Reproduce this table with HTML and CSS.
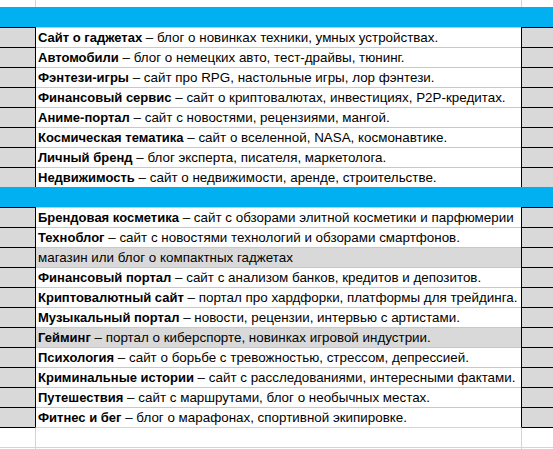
FILE: index.html
```html
<!DOCTYPE html>
<html lang="ru">
<head>
<meta charset="utf-8">
<link rel="stylesheet" href="styles.css">
</head>
<body>
<div class="sheet">
  <div class="row top"><div class="a"></div><div class="b"></div><div class="c"></div></div>
  <div class="row blue"><div class="a"></div><div class="b"></div><div class="c"></div></div>

  <div class="row data"><div class="a"></div><div class="b"><b>Сайт о гаджетах</b> – блог о новинках техники, умных устройствах.</div><div class="c"></div></div>
  <div class="row data"><div class="a"></div><div class="b"><b>Автомобили</b> – блог о немецких авто, тест-драйвы, тюнинг.</div><div class="c"></div></div>
  <div class="row data"><div class="a"></div><div class="b"><b>Фэнтези-игры</b> – сайт про RPG, настольные игры, лор фэнтези.</div><div class="c"></div></div>
  <div class="row data"><div class="a"></div><div class="b"><b>Финансовый сервис</b> – сайт о криптовалютах, инвестициях, P2P-кредитах.</div><div class="c"></div></div>
  <div class="row data"><div class="a"></div><div class="b"><b>Аниме-портал</b> – сайт с новостями, рецензиями, мангой.</div><div class="c"></div></div>
  <div class="row data"><div class="a"></div><div class="b"><b>Космическая тематика</b> – сайт о вселенной, NASA, космонавтике.</div><div class="c"></div></div>
  <div class="row data"><div class="a"></div><div class="b"><b>Личный бренд</b> – блог эксперта, писателя, маркетолога.</div><div class="c"></div></div>
  <div class="row data"><div class="a"></div><div class="b"><b>Недвижимость</b> – сайт о недвижимости, аренде, строительстве.</div><div class="c"></div></div>

  <div class="row blue"><div class="a"></div><div class="b"></div><div class="c"></div></div>

  <div class="row data"><div class="a"></div><div class="b"><b>Брендовая косметика</b> – сайт с обзорами элитной косметики и парфюмерии</div><div class="c"></div></div>
  <div class="row data"><div class="a"></div><div class="b"><b>Техноблог</b> – сайт с новостями технологий и обзорами смартфонов.</div><div class="c"></div></div>
  <div class="row data shade"><div class="a"></div><div class="b">магазин или блог о компактных гаджетах</div><div class="c"></div></div>
  <div class="row data"><div class="a"></div><div class="b"><b>Финансовый портал</b> – сайт с анализом банков, кредитов и депозитов.</div><div class="c"></div></div>
  <div class="row data"><div class="a"></div><div class="b"><b>Криптовалютный сайт</b> – портал про хардфорки, платформы для трейдинга.</div><div class="c"></div></div>
  <div class="row data"><div class="a"></div><div class="b"><b>Музыкальный портал</b> – новости, рецензии, интервью с артистами.</div><div class="c"></div></div>
  <div class="row data shade"><div class="a"></div><div class="b"><b>Гейминг</b> – портал о киберспорте, новинках игровой индустрии.</div><div class="c"></div></div>
  <div class="row data"><div class="a"></div><div class="b"><b>Психология</b> – сайт о борьбе с тревожностью, стрессом, депрессией.</div><div class="c"></div></div>
  <div class="row data"><div class="a"></div><div class="b"><b>Криминальные истории</b> – сайт с расследованиями, интересными фактами.</div><div class="c"></div></div>
  <div class="row data"><div class="a"></div><div class="b"><b>Путешествия</b> – сайт с маршрутами, блог о необычных местах.</div><div class="c"></div></div>
  <div class="row data"><div class="a"></div><div class="b"><b>Фитнес и бег</b> – блог о марафонах, спортивной экипировке.</div><div class="c"></div></div>

  <div class="row empty first"><div class="a"></div><div class="b"></div><div class="c"></div></div>
  <div class="row empty"><div class="a"></div><div class="b"></div><div class="c"></div></div>
</div>
</body>
</html>
```

FILE: styles.css
```css
html, body {
  margin: 0;
  padding: 0;
  background: #ffffff;
}

body {
  font-family: "Liberation Sans", Arial, sans-serif;
  font-size: 13.4px;
  color: #000000;
}

.sheet {
  width: 553px;
  height: 449px;
  overflow: hidden;
}

.row {
  display: grid;
  grid-template-columns: 36px 485px 32px;
  height: 20px;
}

.row > div {
  box-sizing: border-box;
  height: 100%;
}

.row b {
  font-weight: bold;
  font-size: 13px;
}

.top {
  height: 7px;
}

.top .a,
.empty .a {
  border-right: 1px solid #d4d4d4;
}

.top .c,
.empty .c {
  border-left: 1px solid #d4d4d4;
}

.blue {
  background: #00b0f0;
}

.data .a {
  background: #d9d9d9;
  border-top: 1px solid #000000;
  border-right: 1px solid #000000;
}

.data .c {
  background: #d9d9d9;
  border-top: 1px solid #000000;
  border-left: 1px solid #000000;
}

.data .b {
  border-top: 1px solid #c8c8c8;
  padding-left: 2px;
  line-height: 19px;
  white-space: nowrap;
  overflow: hidden;
}

.shade .b {
  background: #d9d9d9;
}

.empty .a,
.empty .b,
.empty .c {
  border-top: 1px solid #d4d4d4;
}

.empty.first .a,
.empty.first .c {
  border-top-color: #000000;
}
```
